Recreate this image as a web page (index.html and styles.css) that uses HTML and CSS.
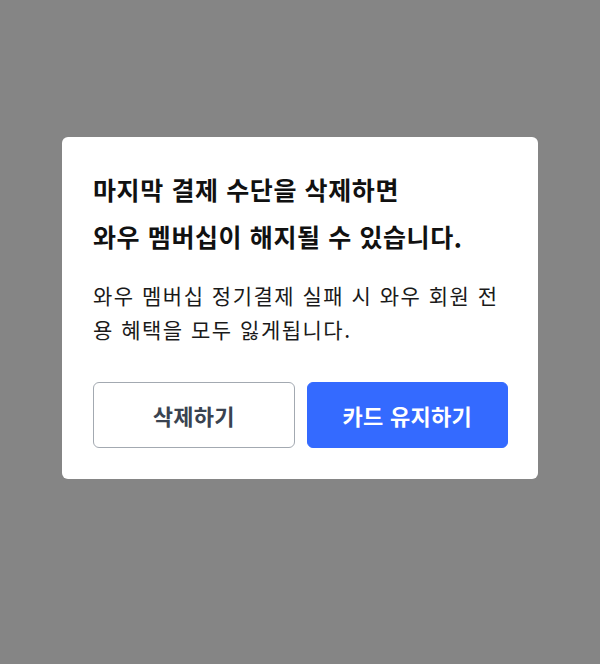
FILE: index.html
```html
<!doctype html>
<html lang="ko">
<head>
    <meta charset="UTF-8">
    <meta name="viewport" content="width=device-width, initial-scale=1.0">
    <title>결제 수단 삭제</title>
    <link rel="stylesheet" href="styles.css">
</head>
<body>

<div class="dim">
    <div class="dialog">
        <h2 class="dialog-title">마지막 결제 수단을 삭제하면<br>와우 멤버십이 해지될 수 있습니다.</h2>
        <p class="dialog-text">와우 멤버십 정기결제 실패 시 와우 회원 전용 혜택을 모두 잃게됩니다.</p>
        <div class="buttons">
            <button class="btn btn-line">삭제하기</button>
            <button class="btn btn-blue">카드 유지하기</button>
        </div>
    </div>
</div>

</body>
</html>
```

FILE: styles.css
```css
body {
    margin: 0;
    font-family: "Noto Sans CJK KR", "Noto Sans", sans-serif;
    background: #858585;
}

.dim {
    height: 664px;
    padding-top: 137px;
    box-sizing: border-box;
    display: flex;
    justify-content: center;
    align-items: flex-start;
}

.dialog {
    width: 476px;
    box-sizing: border-box;
    background: #fff;
    border-radius: 6px;
    padding: 29px 30px 31px 31px;
}

.dialog-title {
    margin: 0;
    font-size: 25px;
    font-weight: 700;
    line-height: 47px;
    color: #111;
    letter-spacing: 0.6px;
}

.dialog-text {
    margin: 18px 0 0 0;
    font-size: 21px;
    line-height: 34px;
    color: #1a1a1a;
    letter-spacing: 1.5px;
    word-break: break-all;
}

.buttons {
    display: flex;
    gap: 12px;
    margin-top: 36px;
}

.btn {
    flex: 1;
    height: 66px;
    border-radius: 6px;
    font-family: inherit;
    font-size: 22px;
    font-weight: 700;
    letter-spacing: 0.3px;
    cursor: pointer;
}

.btn-line {
    background: #fff;
    border: 1px solid #a3a9b1;
    color: #3a4350;
}

.btn-blue {
    background: #346aff;
    border: 1px solid #346aff;
    color: #fff;
}
```
